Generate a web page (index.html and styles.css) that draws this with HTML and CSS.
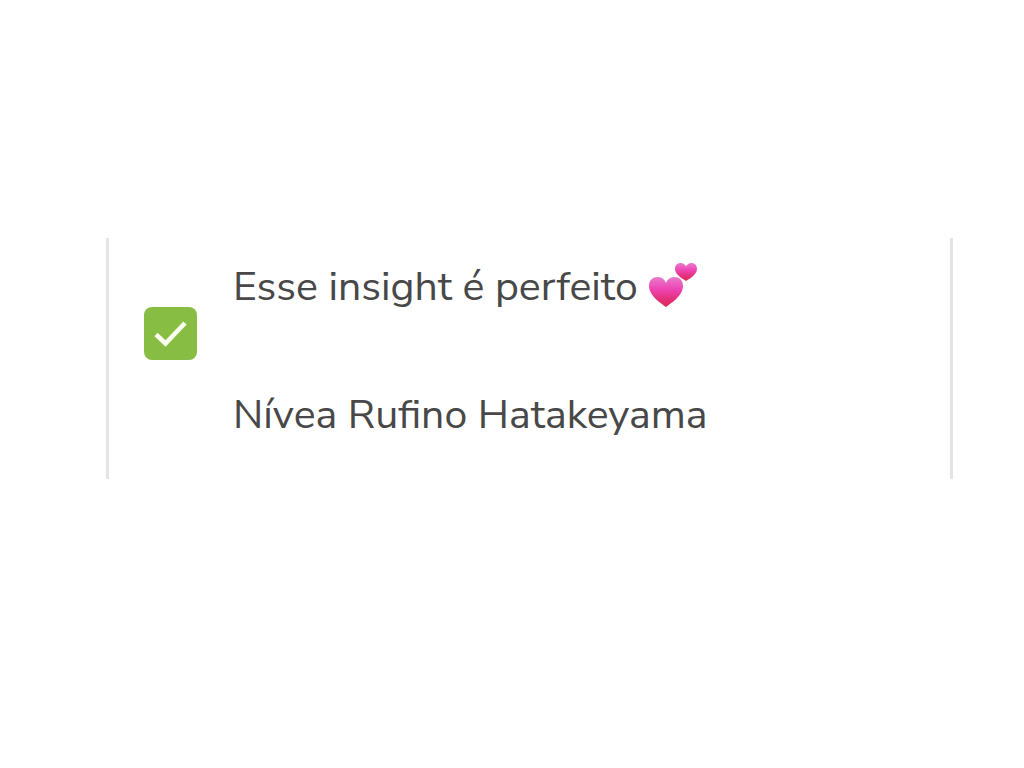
FILE: index.html
```
<!DOCTYPE html>
<html lang="pt-BR">
<head>
    <meta charset="UTF-8">
    <meta name="viewport" content="width=device-width, initial-scale=1.0">
    <title>Esse insight é perfeito</title>
    <link rel="stylesheet" href="styles.css">
</head>
<body>
    <main class="card">
        <div class="check">
            <input type="checkbox" id="insight" checked>
            <svg class="check-mark" viewBox="0 0 53 53" aria-hidden="true">
                <path d="M12 27.500 L21.500 36.500 L41 16" fill="none" stroke="#fafff0" stroke-width="4.600"/>
            </svg>
        </div>
        <label class="message" for="insight">
            <span class="line">Esse insight é perfeito
                <svg class="hearts" viewBox="0 0 50 46" role="img" aria-label="Dois corações">
                    <defs>
                        <linearGradient id="pink" x1="0" y1="0" x2="0" y2="1">
                            <stop offset="0" stop-color="#e87ccb"/>
                            <stop offset="0.4" stop-color="#ee45b4"/>
                            <stop offset="0.75" stop-color="#e32f78"/>
                            <stop offset="1" stop-color="#d42d55"/>
                        </linearGradient>
                    </defs>
                    <path d="M18 45 C14 42 1 34 1 24 C1 18 5 15 9.500 15 C14 15 17 18 18 21 C19 18 22 15 26.500 15 C31 15 35 18 35 24 C35 34 22 42 18 45Z" fill="url(#pink)"/>
                    <path d="M38 19 C36 17.500 27 13 27 7 C27 3 29.500 1 32.500 1 C35.500 1 37.500 3 38 4.500 C38.500 3 40.500 1 43.500 1 C46.500 1 49 3 49 7 C49 13 40 17.500 38 19Z" fill="url(#pink)"/>
                </svg>
            </span>
            <span class="line">Nívea Rufino Hatakeyama</span>
        </label>
    </main>
</body>
</html>
```
FILE: styles.css
```
* {
    box-sizing: border-box;
}
body {
    margin: 0;
    padding: 238px 71px 0 106px;
    background: #fff;
    color: #484848;
    font-family: "Nunito Sans", Nunito, Lato, sans-serif;
    font-size: 41px;
    line-height: 64px;
}
.card {
    display: flex;
    align-items: flex-start;
    gap: 36px;
    padding: 17px 35px 32px;
    border: solid #e4e4e4;
    border-width: 0 3px;
}
.check {
    display: grid;
    flex: none;
    margin-top: 52px;
}
/* Checkbox and its tick share one grid cell */
.check input,
.check-mark {
    grid-area: 1 / 1;
    width: 53px;
    height: 53px;
    margin: 0;
}
.check input {
    appearance: none;
    border-radius: 8px;
    background: #bbb;
    cursor: pointer;
}
.check input:checked {
    background: #88bd43;
}
.check-mark {
    pointer-events: none;
}
.message {
    display: flex;
    flex-direction: column;
    gap: 64px;
}
.line {
    display: block;
}
.hearts {
    width: 50px;
    height: 46px;
    vertical-align: -8px;
}
```
